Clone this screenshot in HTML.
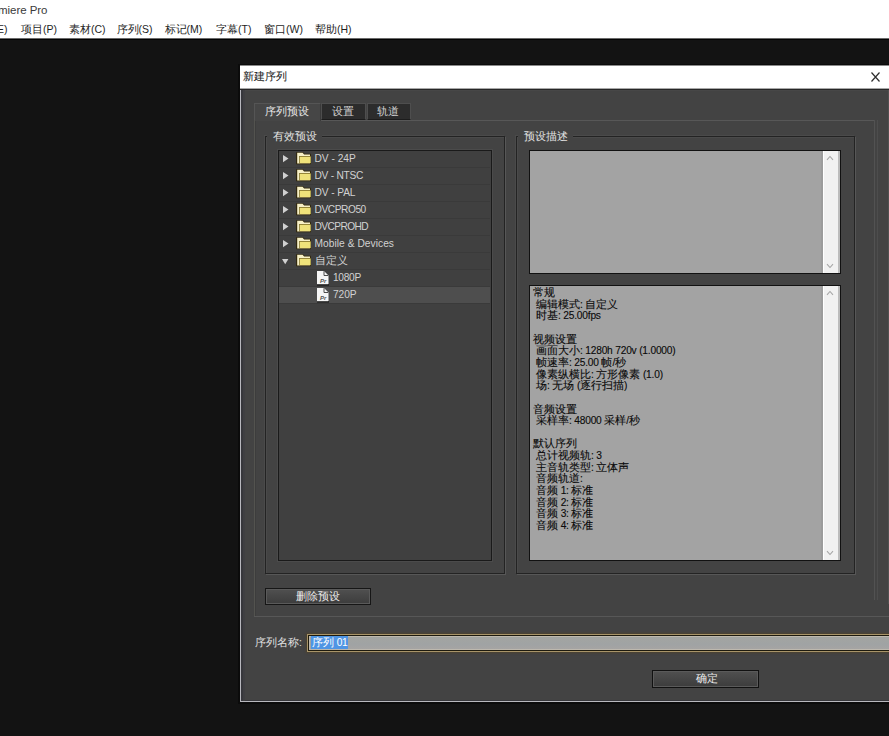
<!DOCTYPE html>
<html><head><meta charset="utf-8">
<style>
*{box-sizing:border-box}
html,body{margin:0;padding:0;overflow:hidden}
body{width:889px;height:736px;overflow:hidden;background:#131313;position:relative;font-family:"Liberation Sans",sans-serif;font-size:11px}
.a{position:absolute}
.t{position:absolute;white-space:nowrap;line-height:1}
.l{font-size:10.2px;letter-spacing:-0.2px}
.mn{font-size:11px;color:#1e1e1e}
.ml{font-size:10.5px}
.tl{font-size:10.2px}
</style></head><body>
<div class="a" style="left:0;top:0;width:889px;height:38px;background:#fff"></div>
<div class="a" style="left:0;top:38px;width:889px;height:1px;background:#6a6a6a"></div>
<div class="a" style="left:0;top:39px;width:889px;height:1px;background:#020202"></div>
<div class="t" style="left:-2px;top:5px;font-size:11.5px;color:#3a3a3a;letter-spacing:-0.05px">miere Pro</div>
<div class="t mn" style="left:-3px;top:24px"><span class="ml">E)</span></div>
<div class="t mn" style="left:21px;top:24px">项目<span class="ml">(P)</span></div>
<div class="t mn" style="left:69px;top:24px">素材<span class="ml">(C)</span></div>
<div class="t mn" style="left:116.5px;top:24px">序列<span class="ml">(S)</span></div>
<div class="t mn" style="left:164.5px;top:24px">标记<span class="ml">(M)</span></div>
<div class="t mn" style="left:216px;top:24px">字幕<span class="ml">(T)</span></div>
<div class="t mn" style="left:264px;top:24px">窗口<span class="ml">(W)</span></div>
<div class="t mn" style="left:315px;top:24px">帮助<span class="ml">(H)</span></div>
<div class="a" style="left:238px;top:64px;width:651px;height:640px;background:#0b0b0b"></div>
<div class="a" style="left:240px;top:65px;width:649px;height:24px;background:#fff;border-top:1px solid #8a8a8a;border-bottom:1px solid #a8a8a8"></div>
<div class="t" style="left:243px;top:71px;font-size:11px;color:#1e1e1e;-webkit-text-stroke:0.08px #1e1e1e">新建序列</div>
<svg class="a" style="left:870px;top:71px" width="11" height="12" viewBox="0 0 11 12"><path d="M1.5 1.5L9.5 10.5M9.5 1.5L1.5 10.5" stroke="#2e2e2e" stroke-width="1.2"/></svg>
<div class="a" style="left:240px;top:89px;width:649px;height:613px;background:#434343"></div>
<div class="a" style="left:240px;top:89px;width:1px;height:613px;background:#b8b8be"></div>
<div class="a" style="left:240px;top:89px;width:649px;height:1px;background:#262626"></div>
<div class="a" style="left:243px;top:90px;width:645px;height:1px;background:#474747"></div>
<div class="a" style="left:241px;top:700px;width:648px;height:1px;background:#38383c"></div>
<div class="a" style="left:240px;top:701px;width:649px;height:1px;background:#b8b8be"></div>
<div class="a" style="left:241px;top:90px;width:2px;height:611px;background:#37373c"></div>
<div class="a" style="left:243px;top:90px;width:2px;height:611px;background:#3f3f42"></div>
<div class="a" style="left:888px;top:90px;width:1px;height:514px;background:#515151"></div>
<div class="a" style="left:254px;top:103px;width:67px;height:18px;background:#464646;border-top:1px solid #555;border-left:1px solid #555;border-right:1px solid #3a3a3a"></div>
<div class="t" style="left:265px;top:106px;color:#e8e8e8">序列预设</div>
<div class="a" style="left:321px;top:103px;width:45px;height:17px;background:#2c2c2c;border:1px solid #4e4e4e;border-bottom:1px solid #1c1c1c"></div>
<div class="t" style="left:332px;top:106px;color:#d0d0d0">设置</div>
<div class="a" style="left:367px;top:103px;width:44px;height:17px;background:#2c2c2c;border:1px solid #4e4e4e;border-bottom:1px solid #1c1c1c"></div>
<div class="t" style="left:377px;top:106px;color:#d0d0d0">轨道</div>
<div class="a" style="left:254px;top:120px;width:1px;height:497px;background:#53534f"></div>
<div class="a" style="left:255px;top:121px;width:1px;height:495px;background:#3d3d3d"></div>
<div class="a" style="left:321px;top:120px;width:553px;height:1px;background:#575757"></div>
<div class="a" style="left:254px;top:616px;width:635px;height:1px;background:#575757"></div>
<div class="a" style="left:874px;top:120px;width:1px;height:480px;background:#525252"></div>
<div class="a" style="left:877px;top:120px;width:1px;height:480px;background:#4d4d4d"></div>
<div class="a" style="left:265px;top:136px;width:240px;height:438px;border:1px solid #232323;box-shadow:1px 1px 0 #575757,-1px -1px 0 #4a4a4a,inset 1px 1px 0 #4a4a4a"></div>
<div class="t" style="left:267px;top:131px;padding:0 5px 0 6px;background:#434343;color:#e2e2e2;height:11px">有效预设</div>
<div class="a" style="left:516px;top:136px;width:339px;height:438px;border:1px solid #232323;box-shadow:1px 1px 0 #575757,-1px -1px 0 #4a4a4a,inset 1px 1px 0 #4a4a4a"></div>
<div class="t" style="left:518px;top:131px;padding:0 5px 0 6px;background:#434343;color:#e2e2e2;height:11px">预设描述</div>
<div class="a" style="left:278px;top:150px;width:214px;height:411px;background:#404040;border:1px solid #1a1a1a;box-shadow:0 0 0 1px #4b4b4b"><div class="a" style="left:0;top:0px;width:211px;height:17px;border-bottom:1px solid #3a3a3a"><svg class="a" style="left:4px;top:4px" width="6" height="8" viewBox="0 0 6 8"><path d="M0 0L5.5 3.6L0 7.2z" fill="#d0d0d0"/></svg><svg class="a" style="left:17px;top:0px" width="16" height="14" viewBox="0 0 16 14"><path d="M0.2 1.2h6.8l1.5 1.6h6.3v10.4h-14.6z" fill="#2e2406"/><path d="M1.2 1.8h5.4l1.5 1.8h5.9v8.8h-12.8z" fill="#f7f0c6"/><path d="M3.2 5h11.8v7.4h-11.8z" fill="#5a4a10"/><path d="M3.7 5.6h10.9v6.4h-10.9z" fill="#efe27a"/></svg><div class="t" style="left:35.5px;top:2px;color:#d2d2d2;letter-spacing:0px"><span class="tl">DV - 24P</span></div></div><div class="a" style="left:0;top:17px;width:211px;height:17px;border-bottom:1px solid #3a3a3a"><svg class="a" style="left:4px;top:4px" width="6" height="8" viewBox="0 0 6 8"><path d="M0 0L5.5 3.6L0 7.2z" fill="#d0d0d0"/></svg><svg class="a" style="left:17px;top:0px" width="16" height="14" viewBox="0 0 16 14"><path d="M0.2 1.2h6.8l1.5 1.6h6.3v10.4h-14.6z" fill="#2e2406"/><path d="M1.2 1.8h5.4l1.5 1.8h5.9v8.8h-12.8z" fill="#f7f0c6"/><path d="M3.2 5h11.8v7.4h-11.8z" fill="#5a4a10"/><path d="M3.7 5.6h10.9v6.4h-10.9z" fill="#efe27a"/></svg><div class="t" style="left:35.5px;top:2px;color:#d2d2d2;letter-spacing:-0.25px"><span class="tl">DV - NTSC</span></div></div><div class="a" style="left:0;top:34px;width:211px;height:17px;border-bottom:1px solid #3a3a3a"><svg class="a" style="left:4px;top:4px" width="6" height="8" viewBox="0 0 6 8"><path d="M0 0L5.5 3.6L0 7.2z" fill="#d0d0d0"/></svg><svg class="a" style="left:17px;top:0px" width="16" height="14" viewBox="0 0 16 14"><path d="M0.2 1.2h6.8l1.5 1.6h6.3v10.4h-14.6z" fill="#2e2406"/><path d="M1.2 1.8h5.4l1.5 1.8h5.9v8.8h-12.8z" fill="#f7f0c6"/><path d="M3.2 5h11.8v7.4h-11.8z" fill="#5a4a10"/><path d="M3.7 5.6h10.9v6.4h-10.9z" fill="#efe27a"/></svg><div class="t" style="left:35.5px;top:2px;color:#d2d2d2;letter-spacing:-0.1px"><span class="tl">DV - PAL</span></div></div><div class="a" style="left:0;top:51px;width:211px;height:17px;border-bottom:1px solid #3a3a3a"><svg class="a" style="left:4px;top:4px" width="6" height="8" viewBox="0 0 6 8"><path d="M0 0L5.5 3.6L0 7.2z" fill="#d0d0d0"/></svg><svg class="a" style="left:17px;top:0px" width="16" height="14" viewBox="0 0 16 14"><path d="M0.2 1.2h6.8l1.5 1.6h6.3v10.4h-14.6z" fill="#2e2406"/><path d="M1.2 1.8h5.4l1.5 1.8h5.9v8.8h-12.8z" fill="#f7f0c6"/><path d="M3.2 5h11.8v7.4h-11.8z" fill="#5a4a10"/><path d="M3.7 5.6h10.9v6.4h-10.9z" fill="#efe27a"/></svg><div class="t" style="left:35.5px;top:2px;color:#d2d2d2;letter-spacing:-0.45px"><span class="tl">DVCPRO50</span></div></div><div class="a" style="left:0;top:68px;width:211px;height:17px;border-bottom:1px solid #3a3a3a"><svg class="a" style="left:4px;top:4px" width="6" height="8" viewBox="0 0 6 8"><path d="M0 0L5.5 3.6L0 7.2z" fill="#d0d0d0"/></svg><svg class="a" style="left:17px;top:0px" width="16" height="14" viewBox="0 0 16 14"><path d="M0.2 1.2h6.8l1.5 1.6h6.3v10.4h-14.6z" fill="#2e2406"/><path d="M1.2 1.8h5.4l1.5 1.8h5.9v8.8h-12.8z" fill="#f7f0c6"/><path d="M3.2 5h11.8v7.4h-11.8z" fill="#5a4a10"/><path d="M3.7 5.6h10.9v6.4h-10.9z" fill="#efe27a"/></svg><div class="t" style="left:35.5px;top:2px;color:#d2d2d2;letter-spacing:-0.6px"><span class="tl">DVCPROHD</span></div></div><div class="a" style="left:0;top:85px;width:211px;height:17px;border-bottom:1px solid #3a3a3a"><svg class="a" style="left:4px;top:4px" width="6" height="8" viewBox="0 0 6 8"><path d="M0 0L5.5 3.6L0 7.2z" fill="#d0d0d0"/></svg><svg class="a" style="left:17px;top:0px" width="16" height="14" viewBox="0 0 16 14"><path d="M0.2 1.2h6.8l1.5 1.6h6.3v10.4h-14.6z" fill="#2e2406"/><path d="M1.2 1.8h5.4l1.5 1.8h5.9v8.8h-12.8z" fill="#f7f0c6"/><path d="M3.2 5h11.8v7.4h-11.8z" fill="#5a4a10"/><path d="M3.7 5.6h10.9v6.4h-10.9z" fill="#efe27a"/></svg><div class="t" style="left:35.5px;top:2px;color:#d2d2d2;letter-spacing:0.05px"><span class="tl">Mobile &amp; Devices</span></div></div><div class="a" style="left:0;top:102px;width:211px;height:17px;border-bottom:1px solid #3a3a3a"><svg class="a" style="left:3px;top:6px" width="7" height="6" viewBox="0 0 7 6"><path d="M0 0L6.4 0L3.2 5.2z" fill="#d0d0d0"/></svg><svg class="a" style="left:17px;top:0px" width="16" height="14" viewBox="0 0 16 14"><path d="M0.2 1.2h6.8l1.5 1.6h6.3v10.4h-14.6z" fill="#2e2406"/><path d="M1.2 1.8h5.4l1.5 1.8h5.9v8.8h-12.8z" fill="#f7f0c6"/><path d="M3.2 5h11.8v7.4h-11.8z" fill="#5a4a10"/><path d="M3.7 5.6h10.9v6.4h-10.9z" fill="#efe27a"/></svg><div class="t" style="left:35.5px;top:2px;color:#d2d2d2;letter-spacing:0px">自定义</div></div><div class="a" style="left:0;top:119px;width:211px;height:17px;border-bottom:1px solid #3a3a3a"><svg class="a" style="left:38px;top:0px" width="13" height="17" viewBox="0 0 13 17"><rect x="0" y="14" width="12" height="1.5" fill="#0e0e0e"/><path d="M0 1h7l4.5 4.5v8.7h-11.5z" fill="#f6f6f6"/><path d="M7 1.2v4.3h4.3" fill="none" stroke="#3a3a3a" stroke-width="0.9"/><text x="3" y="13" font-family="Liberation Sans" font-size="6" font-style="italic" font-weight="bold" fill="#505050">Pr</text></svg><div class="t" style="left:54px;top:2px;color:#d2d2d2;letter-spacing:-0.3px"><span class="tl">1080P</span></div></div><div class="a" style="left:0;top:136px;width:211px;height:17px;background:#4e4e4e;border-bottom:1px solid #3a3a3a"><svg class="a" style="left:38px;top:0px" width="13" height="17" viewBox="0 0 13 17"><rect x="0" y="14" width="12" height="1.5" fill="#0e0e0e"/><path d="M0 1h7l4.5 4.5v8.7h-11.5z" fill="#f6f6f6"/><path d="M7 1.2v4.3h4.3" fill="none" stroke="#3a3a3a" stroke-width="0.9"/><text x="3" y="13" font-family="Liberation Sans" font-size="6" font-style="italic" font-weight="bold" fill="#505050">Pr</text></svg><div class="t" style="left:54px;top:2px;color:#d2d2d2;letter-spacing:-0.1px"><span class="tl">720P</span></div></div></div>
<div class="a" style="left:529px;top:150px;width:312px;height:124px;background:#a3a3a3;border:1px solid #111"></div>
<div class="a" style="left:821px;top:151px;width:2px;height:122px;background:#9c9c9c"></div>
<div class="a" style="left:823px;top:151px;width:17px;height:122px;background:#f1f1f1;border-left:1px solid #fff;border-right:2px solid #bcbcbc"></div>
<svg class="a" style="left:826px;top:155px" width="8" height="6" viewBox="0 0 8 6"><path d="M1 4.8L4 1.5L7 4.8" fill="none" stroke="#a6a6a6" stroke-width="1.1"/></svg>
<svg class="a" style="left:826px;top:263px" width="8" height="6" viewBox="0 0 8 6"><path d="M1 1.2L4 4.5L7 1.2" fill="none" stroke="#a6a6a6" stroke-width="1.1"/></svg>
<div class="a" style="left:529px;top:285px;width:312px;height:276px;background:#a3a3a3;border:1px solid #111"></div>
<div class="a" style="left:821px;top:286px;width:2px;height:274px;background:#9c9c9c"></div>
<div class="a" style="left:823px;top:286px;width:17px;height:274px;background:#f1f1f1;border-left:1px solid #fff;border-right:2px solid #bcbcbc"></div>
<svg class="a" style="left:826px;top:290px" width="8" height="6" viewBox="0 0 8 6"><path d="M1 4.8L4 1.5L7 4.8" fill="none" stroke="#a6a6a6" stroke-width="1.1"/></svg>
<svg class="a" style="left:826px;top:550px" width="8" height="6" viewBox="0 0 8 6"><path d="M1 1.2L4 4.5L7 1.2" fill="none" stroke="#a6a6a6" stroke-width="1.1"/></svg>
<div style="color:#0a0a0a;-webkit-text-stroke:0.12px #0a0a0a">
<div class="t" style="left:533px;top:287.00px">常规</div>
<div class="t" style="left:536px;top:298.65px">编辑模式<span class="l">: </span>自定义</div>
<div class="t" style="left:536px;top:310.30px">时基<span class="l">: 25.00fps</span></div>
<div class="t" style="left:533px;top:333.60px">视频设置</div>
<div class="t" style="left:536px;top:345.25px">画面大小<span class="l">: 1280h 720v (1.0000)</span></div>
<div class="t" style="left:536px;top:356.90px">帧速率<span class="l">: 25.00 </span>帧<span class="l">/</span>秒</div>
<div class="t" style="left:536px;top:368.55px">像素纵横比<span class="l">: </span>方形像素<span class="l"> (1.0)</span></div>
<div class="t" style="left:536px;top:380.20px">场<span class="l">: </span>无场<span class="l"> (</span>逐行扫描<span class="l">)</span></div>
<div class="t" style="left:533px;top:403.50px">音频设置</div>
<div class="t" style="left:536px;top:415.15px">采样率<span class="l">: 48000 </span>采样<span class="l">/</span>秒</div>
<div class="t" style="left:533px;top:438.45px">默认序列</div>
<div class="t" style="left:536px;top:450.10px">总计视频轨<span class="l">: 3</span></div>
<div class="t" style="left:536px;top:461.75px">主音轨类型<span class="l">: </span>立体声</div>
<div class="t" style="left:536px;top:473.40px">音频轨道<span class="l">:</span></div>
<div class="t" style="left:536px;top:485.05px">音频<span class="l"> 1: </span>标准</div>
<div class="t" style="left:536px;top:496.70px">音频<span class="l"> 2: </span>标准</div>
<div class="t" style="left:536px;top:508.35px">音频<span class="l"> 3: </span>标准</div>
<div class="t" style="left:536px;top:520.00px">音频<span class="l"> 4: </span>标准</div>
</div>
<div class="a" style="left:265px;top:588px;width:106px;height:17px;background:linear-gradient(#505050,#3c3c3c);border:1px solid #161616;box-shadow:inset 0 0 0 1px #5a5a5a"></div>
<div class="t" style="left:296px;top:591px;color:#ececec">删除预设</div>
<div class="t" style="left:255px;top:637px;color:#e0e0e0">序列名称<span class="l">:</span></div>
<div class="a" style="left:307px;top:634px;width:590px;height:18px;background:linear-gradient(#a3a5a0,#a0a3a4 60%,#a8a5a3);border:1px solid #a89468;box-shadow:inset 0 0 0 1px #1e1b0e,inset 0 0 0 2px #bdb8ae,0 0 2px 1px #4d4330"></div>
<div class="a" style="left:311px;top:636px;width:37px;height:13px;background:#4f95e4"></div>
<div class="t" style="left:312px;top:637px;color:#fff">序列<span class="l"> 01</span></div>
<div class="a" style="left:652px;top:670px;width:107px;height:18px;background:linear-gradient(#505050,#3c3c3c);border:1px solid #111;box-shadow:inset 0 0 0 1px #5a5a5a"></div>
<div class="t" style="left:696px;top:673px;color:#ececec">确定</div>
</body></html>
